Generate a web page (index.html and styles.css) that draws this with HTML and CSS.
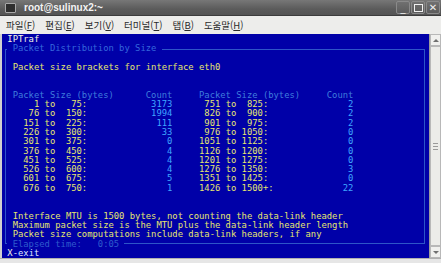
FILE: index.html
```html
<!DOCTYPE html>
<html lang="ko">
<head>
    <meta charset="UTF-8">
    <title>root@sulinux2:~</title>
    <link rel="stylesheet" href="styles.css">
</head>
<body>
    <div class="window">
        <div class="titlebar">
            <span class="app-icon"></span>
            <span class="title">root@sulinux2:~</span>
            <div class="win-buttons">
                <span class="win-btn">_</span>
                <span class="win-btn"><span class="max-box"></span></span>
                <span class="win-btn">&#x2715;</span>
            </div>
        </div>

        <div class="menubar">
            <span>파일(<u>F</u>)</span>
            <span>편집(<u>E</u>)</span>
            <span>보기(<u>V</u>)</span>
            <span>터미널(<u>T</u>)</span>
            <span>탭(<u>B</u>)</span>
            <span>도움말(<u>H</u>)</span>
        </div>

        <div class="main">
            <div class="edge-left"></div>
            <div class="term">
                <div class="row top-line"> IPTraf</div>
                <div class="box">
                    <div class="cap"><span class="cap-text"> Packet Distribution by Size </span></div>
                    <div class="row"> </div>
                    <div class="row y"> Packet size brackets for interface eth0</div>
                    <div class="row"> </div>
                    <div class="row"> </div>
                    <div class="row h"> Packet Size (bytes)      Count     Packet Size (bytes)     Count</div>
                    <div class="row"><span class="y">     1 to   75:</span><span class="c">            3173</span><span class="y">      751 to  825:</span><span class="c">               2</span></div>
                    <div class="row"><span class="y">    76 to  150:</span><span class="c">            1994</span><span class="y">      826 to  900:</span><span class="c">               2</span></div>
                    <div class="row"><span class="y">   151 to  225:</span><span class="c">             111</span><span class="y">      901 to  975:</span><span class="c">               2</span></div>
                    <div class="row"><span class="y">   226 to  300:</span><span class="c">              33</span><span class="y">      976 to 1050:</span><span class="c">               0</span></div>
                    <div class="row"><span class="y">   301 to  375:</span><span class="c">               0</span><span class="y">     1051 to 1125:</span><span class="c">               0</span></div>
                    <div class="row"><span class="y">   376 to  450:</span><span class="c">               4</span><span class="y">     1126 to 1200:</span><span class="c">               0</span></div>
                    <div class="row"><span class="y">   451 to  525:</span><span class="c">               4</span><span class="y">     1201 to 1275:</span><span class="c">               0</span></div>
                    <div class="row"><span class="y">   526 to  600:</span><span class="c">               4</span><span class="y">     1276 to 1350:</span><span class="c">               3</span></div>
                    <div class="row"><span class="y">   601 to  675:</span><span class="c">               5</span><span class="y">     1351 to 1425:</span><span class="c">               0</span></div>
                    <div class="row"><span class="y">   676 to  750:</span><span class="c">               1</span><span class="y">     1426 to 1500+:</span><span class="c">             22</span></div>
                    <div class="row"> </div>
                    <div class="row"> </div>
                    <div class="row y"> Interface MTU is 1500 bytes, not counting the data-link header</div>
                    <div class="row y"> Maximum packet size is the MTU plus the data-link header length</div>
                    <div class="row y"> Packet size computations include data-link headers, if any</div>
                    <div class="cap cap-bottom"><span class="cap-text dim"> Elapsed time:   0:05 </span></div>
                </div>
                <div class="row bottom-line"> <span class="key">X</span>-exit</div>
            </div>
            <div class="scrollbar">
                <div class="sb-btn"><span class="arrow-up"></span></div>
                <div class="sb-thumb"><span class="grip"></span></div>
                <div class="sb-btn"><span class="arrow-down"></span></div>
            </div>
        </div>
        <div class="edge-bottom"></div>
    </div>
</body>
</html>
```

FILE: styles.css
```css
body {
    margin: 0;
    padding: 0;
    background: #d8d8d8;
}
.window {
    width: 441px;
    height: 263px;
    display: flex;
    flex-direction: column;
    overflow: hidden;
}
.titlebar {
    height: 16px;
    flex: none;
    display: flex;
    align-items: center;
    background: linear-gradient(#777777, #5b5b5b 60%, #545454);
    border-bottom: 1px solid #3c3c3c;
    box-sizing: border-box;
}
.app-icon {
    width: 9px;
    height: 8px;
    margin-left: 5px;
    background: #2e2e2e;
    border: 1px solid #a8a8a8;
    border-radius: 1px;
}
.title {
    margin-left: 8px;
    font-family: "Liberation Sans", Arial, sans-serif;
    font-weight: bold;
    font-size: 10px;
    color: #f4f4f4;
}
.win-buttons {
    margin-left: auto;
    margin-right: 1px;
    display: flex;
    gap: 1px;
}
.win-btn {
    width: 14px;
    height: 13px;
    box-sizing: border-box;
    border: 1px solid #8a8a8a;
    border-radius: 2px;
    background: linear-gradient(#707070, #5c5c5c);
    color: #f0f0f0;
    font-family: "DejaVu Sans", sans-serif;
    font-size: 10px;
    line-height: 10px;
    display: flex;
    align-items: center;
    justify-content: center;
}
.max-box {
    width: 7px;
    height: 6px;
    border: 1px solid #f0f0f0;
}
.menubar {
    height: 18px;
    flex: none;
    display: flex;
    align-items: center;
    gap: 10px;
    padding-left: 6px;
    background: #ededeb;
    font-family: "Noto Sans CJK KR", sans-serif;
    font-size: 9.5px;
    color: #2a2a2a;
    box-sizing: border-box;
}
.main {
    height: 224px;
    flex: none;
    display: flex;
}
.edge-left {
    width: 2px;
    background: #d0d0d0;
}
.term {
    width: 427px;
    background: #0000a8;
    padding-top: 1px;
    box-sizing: border-box;
    font-family: "DejaVu Sans Mono", monospace;
    font-size: 8.86px;
    line-height: 9.3px;
    color: #e6e66e;
}
.row, .cap {
    height: 9.3px;
    white-space: pre;
}
.top-line {
    color: #f6f6e6;
}
.bottom-line {
    color: #dfe6ff;
}
.key {
    color: #f6f6e6;
}
.box {
    margin: 4.65px 0 4.65px 0.5ch;
    width: 79ch;
    box-sizing: border-box;
    border: 1px solid #2d55c8;
    padding-left: calc(0.5ch - 1px);
}
.cap {
    margin-top: -5.65px;
}
.cap-bottom {
    margin-top: 0;
    margin-bottom: -5.65px;
}
.cap-text {
    background: #0000a8;
    color: #3568dc;
}
.cap-text.dim {
    color: #2f5ccc;
}
.y {
    color: #e6e66e;
}
.h {
    color: #3f7ddc;
}
.c {
    color: #3fa6ff;
}
.scrollbar {
    width: 12px;
    display: flex;
    flex-direction: column;
    background: #e4e4e2;
    border-left: 1px solid #9c9c9c;
    box-sizing: border-box;
}
.sb-btn {
    height: 10px;
    display: flex;
    align-items: center;
    justify-content: center;
    border: 1px solid #b8b8b8;
    background: #f0f0ee;
}
.sb-thumb {
    flex: 1;
    display: flex;
    align-items: center;
    justify-content: center;
    border: 1px solid #b8b8b8;
    background: #ecece9;
}
.grip {
    width: 5px;
    height: 5px;
    border-top: 1px solid #9a9a9a;
    border-bottom: 1px solid #9a9a9a;
    background: linear-gradient(transparent 2px, #9a9a9a 2px, #9a9a9a 3px, transparent 3px);
}
.arrow-up {
    border-left: 3px solid transparent;
    border-right: 3px solid transparent;
    border-bottom: 3px solid #707070;
}
.arrow-down {
    border-left: 3px solid transparent;
    border-right: 3px solid transparent;
    border-top: 3px solid #707070;
}
.edge-bottom {
    flex: 1;
    background: #e6e6e6;
    border-top: 1px solid #b0b0b0;
}
```
